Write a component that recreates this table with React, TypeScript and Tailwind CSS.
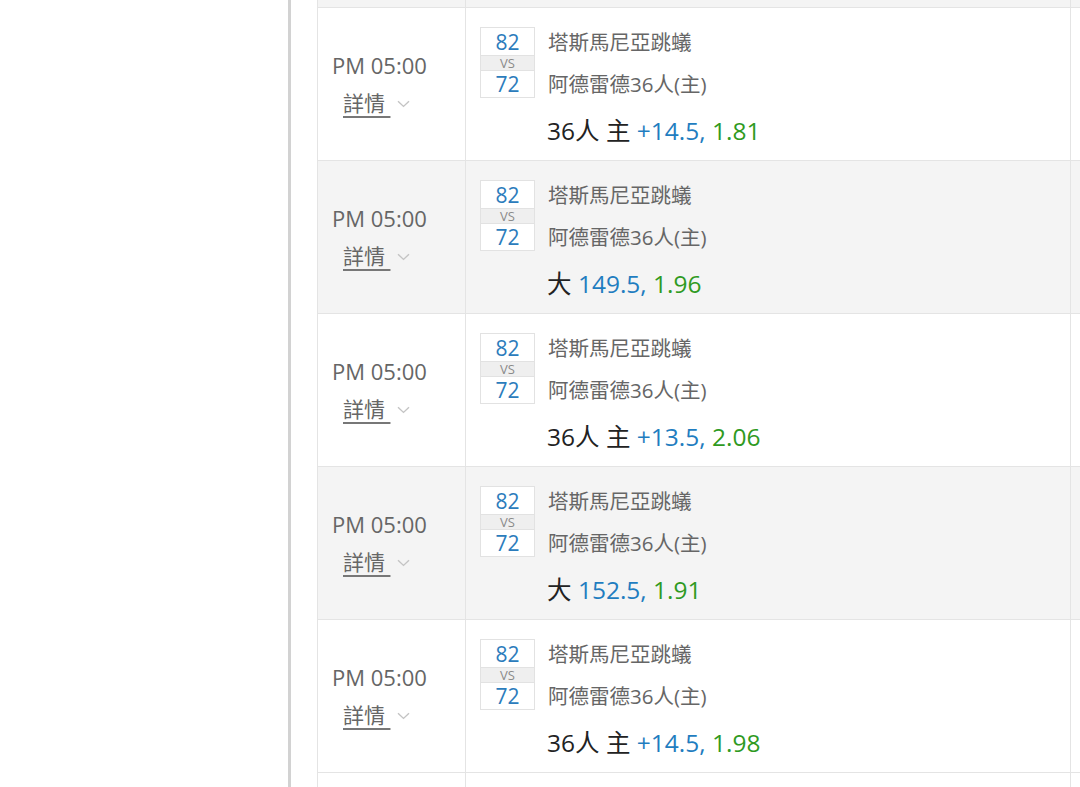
import React from 'react';

type Bet = { label: string; line: string; odds: string };

interface Match {
    time: string;
    home: string;
    away: string;
    homeScore: number;
    awayScore: number;
    bet: Bet;
}

const matches: Match[] = [
    { time: 'PM 05:00', home: '塔斯馬尼亞跳蟻', away: '阿德雷德36人(主)', homeScore: 82, awayScore: 72, bet: { label: '36人 主', line: '+14.5,', odds: '1.81' } },
    { time: 'PM 05:00', home: '塔斯馬尼亞跳蟻', away: '阿德雷德36人(主)', homeScore: 82, awayScore: 72, bet: { label: '大', line: '149.5,', odds: '1.96' } },
    { time: 'PM 05:00', home: '塔斯馬尼亞跳蟻', away: '阿德雷德36人(主)', homeScore: 82, awayScore: 72, bet: { label: '36人 主', line: '+13.5,', odds: '2.06' } },
    { time: 'PM 05:00', home: '塔斯馬尼亞跳蟻', away: '阿德雷德36人(主)', homeScore: 82, awayScore: 72, bet: { label: '大', line: '152.5,', odds: '1.91' } },
    { time: 'PM 05:00', home: '塔斯馬尼亞跳蟻', away: '阿德雷德36人(主)', homeScore: 82, awayScore: 72, bet: { label: '36人 主', line: '+14.5,', odds: '1.98' } },
];

function Chevron() {
    return (
        <svg width="13" height="8" viewBox="0 0 13 8" fill="none" className="ml-[7px] mt-[1px]">
            <path d="M1 1.2 L6.5 6.4 L12 1.2" stroke="#c4c4c4" strokeWidth="1.4" />
        </svg>
    );
}

function ScoreBox({ home, away }: { home: number; away: number }) {
    return (
        <div className="mt-[6px] w-[55px] shrink-0 self-start border border-[#e2e2e2] bg-white text-center">
            <div className="h-[27px] text-[21px] leading-[28px] text-[#2b7cbc]">{home}</div>
            <div className="h-[16px] border-y border-[#e2e2e2] bg-[#efefef] text-[13px] leading-[14px] text-[#8a8a8a]">VS</div>
            <div className="h-[26px] text-[21px] leading-[26px] text-[#2b7cbc]">{away}</div>
        </div>
    );
}

function MatchRow({ match, shaded }: { match: Match; shaded: boolean }) {
    return (
        <div className={`flex h-[153px] border-b border-[#e4e4e4] ${shaded ? 'bg-[#f4f4f4]' : 'bg-white'}`}>
            {/* Time column */}
            <div className="flex w-[148px] shrink-0 flex-col justify-center border-r border-[#e4e4e4] pl-[14px]">
                <div className="text-[22px] leading-[38px] text-[#666]">{match.time}</div>
                <div className="flex items-center pl-[11px] leading-[38px]">
                    <span className="text-[21px] text-[#666] underline decoration-[#777] underline-offset-[5px]">詳情&nbsp;</span>
                    <Chevron />
                </div>
            </div>

            {/* Match column */}
            <div className="flex w-[605px] shrink-0 gap-[13px] border-r border-[#e4e4e4] pl-[14px] pt-[13px]">
                <ScoreBox home={match.homeScore} away={match.awayScore} />
                <div className="flex flex-col">
                    <div className="text-[20.5px] leading-[42px] text-[#666]">{match.home}</div>
                    <div className="text-[20.5px] leading-[42px] text-[#666]">{match.away}</div>
                    <div className="mt-[8px] -ml-[1px] text-[24.5px] leading-[36px] whitespace-pre">
                        <span className="text-[#222]">{match.bet.label} </span>
                        <span className="text-[#1f7dc0]">{match.bet.line} </span>
                        <span className="text-[#2f9a1f]">{match.bet.odds}</span>
                    </div>
                </div>
            </div>

            <div className="flex-1" />
        </div>
    );
}

export default function App() {
    return (
        <div
            className="flex h-[787px] w-[1080px] overflow-hidden bg-white"
            style={{ fontFamily: '"Open Sans", "Noto Sans CJK TC", sans-serif' }}
        >
            {/* Side panel */}
            <div className="w-[291px] shrink-0 border-r-[3px] border-[#d2d2d2] bg-white" />

            {/* Results list */}
            <div className="flex-1 overflow-hidden pl-[26px]">
                <div className="border-l border-[#e4e4e4]">
                    {/* tail of the row above, scrolled out of view */}
                    <div className="flex h-[8px] border-b border-[#e4e4e4] bg-[#f4f4f4]">
                        <div className="w-[148px] shrink-0 border-r border-[#e4e4e4]" />
                        <div className="w-[605px] shrink-0 border-r border-[#e4e4e4]" />
                    </div>

                    {matches.map((m, idx) => (
                        <MatchRow key={idx} match={m} shaded={idx % 2 === 1} />
                    ))}

                    <div className="flex h-[40px] bg-white">
                        <div className="w-[148px] shrink-0 border-r border-[#e4e4e4]" />
                        <div className="w-[605px] shrink-0 border-r border-[#e4e4e4]" />
                    </div>
                </div>
            </div>
        </div>
    );
}
